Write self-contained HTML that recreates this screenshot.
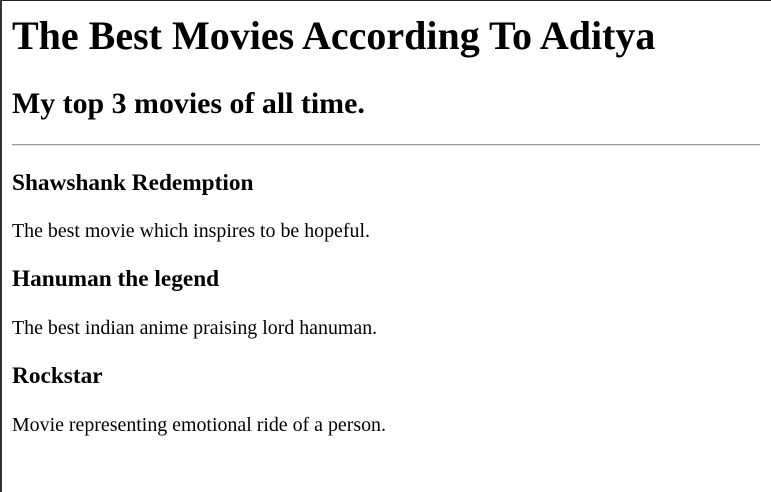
<!DOCTYPE html>
<html><head><meta charset="utf-8"><style>
html,body{margin:0;padding:0;}
body{width:771px;height:492px;position:relative;overflow:hidden;background:#fff;font-family:"Liberation Serif",serif;color:#000;}
.bt{position:absolute;left:0;top:0;width:771px;height:1px;background:#222;}
.bl{position:absolute;left:0;top:0;width:2px;height:492px;background:#333;}
.t{position:absolute;left:12px;margin:0;line-height:1;white-space:nowrap;}
h1.t{font-size:40px;font-weight:bold;}
h2.t{font-size:29.9px;font-weight:bold;}
h3.t{font-size:23.3px;font-weight:bold;}
p.t{font-size:19.9px;}
.hr{position:absolute;left:12px;top:144px;width:748px;height:1px;background:#9a9a9a;border-bottom:1px solid #ddd;}
</style></head><body>
<div class="bt"></div><div class="bl"></div>
<h1 class="t" style="top:16px">The Best Movies According To Aditya</h1>
<h2 class="t" style="top:89px">My top 3 movies of all time.</h2>
<div class="hr"></div>
<h3 class="t" style="top:172px">Shawshank Redemption</h3>
<p class="t" style="top:222px">The best movie which inspires to be hopeful.</p>
<h3 class="t" style="top:268px">Hanuman the legend</h3>
<p class="t" style="top:319px">The best indian anime praising lord hanuman.</p>
<h3 class="t" style="top:365px">Rockstar</h3>
<p class="t" style="top:416px">Movie representing emotional ride of a person.</p>
</body></html>
